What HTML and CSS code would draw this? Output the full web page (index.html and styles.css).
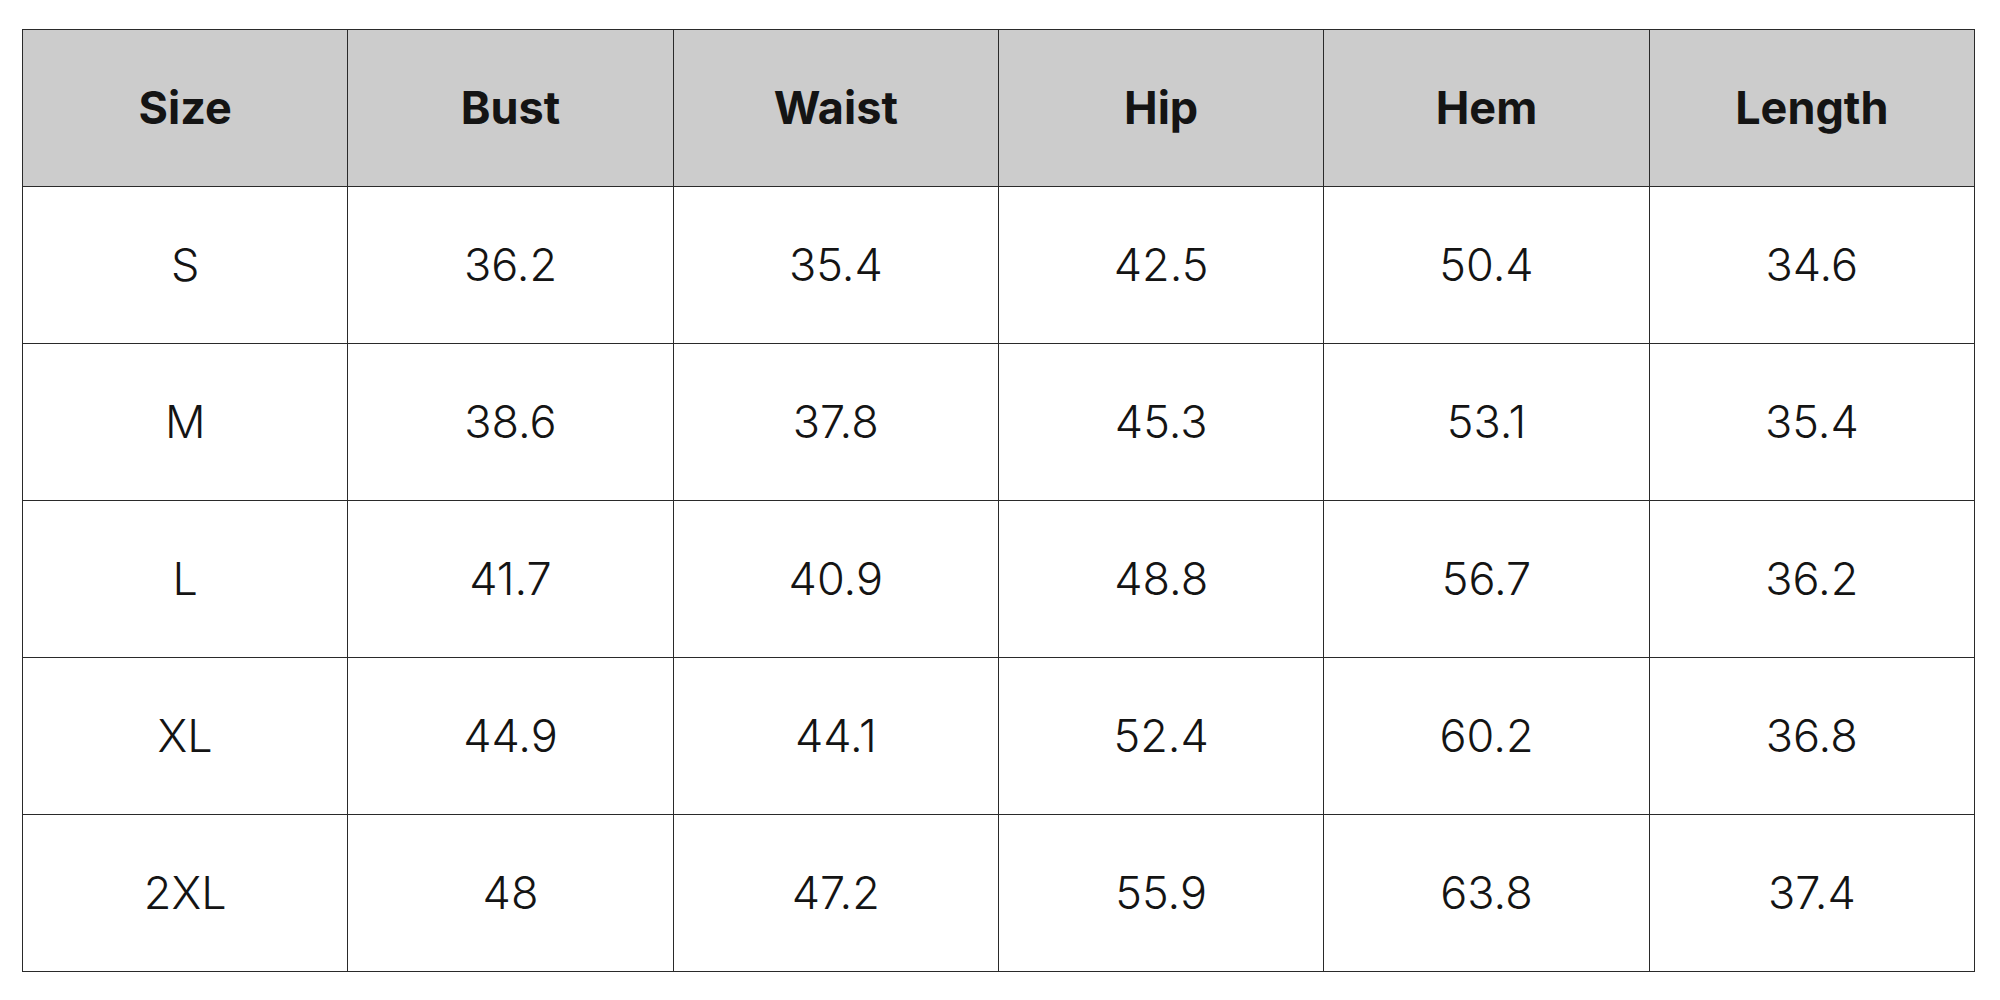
FILE: index.html
```html
<!DOCTYPE html>
<html>
<head>
<meta charset="utf-8">
<link rel="stylesheet" href="styles.css">
</head>
<body>
<table class="size-table">
  <thead>
    <tr><th>Size</th><th>Bust</th><th>Waist</th><th>Hip</th><th>Hem</th><th>Length</th></tr>
  </thead>
  <tbody>
    <tr><td>S</td><td>36.2</td><td>35.4</td><td>42.5</td><td>50.4</td><td>34.6</td></tr>
    <tr><td>M</td><td>38.6</td><td>37.8</td><td>45.3</td><td>53.1</td><td>35.4</td></tr>
    <tr><td>L</td><td>41.7</td><td>40.9</td><td>48.8</td><td>56.7</td><td>36.2</td></tr>
    <tr><td>XL</td><td>44.9</td><td>44.1</td><td>52.4</td><td>60.2</td><td>36.8</td></tr>
    <tr><td>2XL</td><td>48</td><td>47.2</td><td>55.9</td><td>63.8</td><td>37.4</td></tr>
  </tbody>
</table>
</body>
</html>
```
FILE: styles.css
```css
html, body {
  margin: 0;
  padding: 0;
  background: #ffffff;
}
body {
  padding: 29px 0 0 22px;
  font-family: "Inter", "Liberation Sans", sans-serif;
  color: #141414;
}
.size-table {
  border-collapse: collapse;
  width: 1953px;
  table-layout: fixed;
}
.size-table th,
.size-table td {
  border: 1px solid #2a2a2a;
  text-align: center;
  vertical-align: middle;
  height: 154px;
  padding: 0 0 2px 0;
  font-size: 45px;
  line-height: 1;
}
.size-table th {
  background: #cccccc;
  font-weight: 700;
}
.size-table td {
  font-weight: 300;
}
```
